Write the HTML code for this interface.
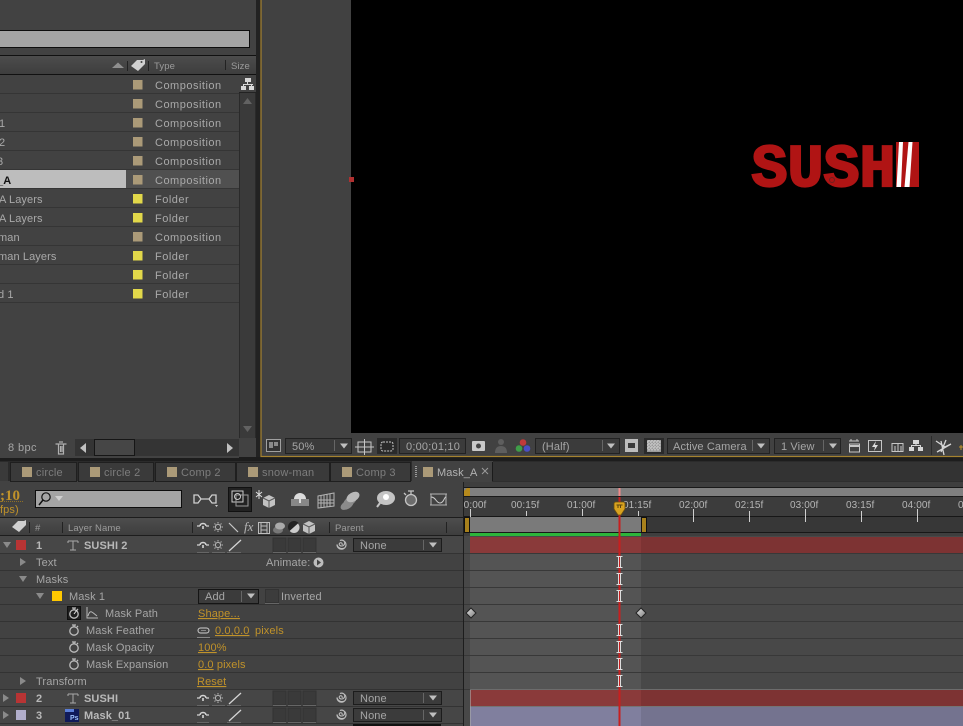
<!DOCTYPE html>
<html><head><meta charset="utf-8"><style>
html,body{margin:0;padding:0;background:#111;width:963px;height:726px;overflow:hidden}
svg{display:block}
text{font-family:"Liberation Sans",sans-serif;font-size:11px;letter-spacing:.12px;fill:#a6a6a6}
.p{letter-spacing:.5px;fill:#a9a9a9}
.n{letter-spacing:.1px;fill:#a9a9a9}
.y{fill:#c0922a;text-decoration:underline dotted}.o{fill:#c0922a}
.b{font-weight:bold;fill:#b8b8b8;letter-spacing:.1px}
.s{font-size:9.5px;fill:#9b9b9b;letter-spacing:.1px}
.d{font-size:10px;fill:#b5b5b5;letter-spacing:.1px}
.tab{fill:#7d7d7d;letter-spacing:.2px}
</style></head><body>
<svg width="963" height="726" viewBox="0 0 963 726" xmlns="http://www.w3.org/2000/svg">
<defs>
<clipPath id="rc"><rect x="464" y="497" width="499" height="20"/></clipPath>
<linearGradient id="hd" x1="0" y1="0" x2="0" y2="1"><stop offset="0" stop-color="#4d4d4d"/><stop offset="1" stop-color="#3d3d3d"/></linearGradient>
<linearGradient id="dm" x1="0" y1="0" x2="1" y2="1"><stop offset="0" stop-color="#e8e8e8"/><stop offset="1" stop-color="#777"/></linearGradient>
<g id="watch" fill="none" stroke="#bdbdbd" stroke-width="1.300"><circle cx="0" cy="1" r="4.200"/><path d="M-2-5H2M0-5V-3M3-4l1 1"/></g>
<g id="ibeam" fill="none" stroke="#ddd" stroke-width="1"><path d="M-3-5.500H-1V5.500H-3M3-5.500H1V5.500H3M-1-5.500H1M-1 5.500H1"/></g>
<g id="drop"><rect x="0" y="0" width="88" height="13" fill="#3b3b3b" stroke="#1c1c1c"/></g>
<g id="shy" fill="none" stroke="#d4d4d4" stroke-width="1.200"><path d="M-6 0H-3M3 0H6"/><path d="M-3 0a3 2.500 0 0 1 6 0M0 0v3" stroke-width="1.600"/></g>
<g id="sun" fill="none" stroke="#b5b5b5" stroke-width="1"><circle r="2.600"/><path d="M0-5V-3.500M0 5V3.500M-5 0H-3.500M5 0H3.500M-3.500-3.500L-2.500-2.500M3.500 3.500L2.500 2.500M-3.500 3.500L-2.500 2.500M3.500-3.500L2.500-2.500"/></g>
<g id="spiral" fill="none" stroke="#bdbdbd" stroke-width="1.100"><path d="M1 1a1.500 1.500 0 1 0-2 .5 3 3 0 1 0 0-5 4.500 4.500 0 1 1-3 4 5 5 0 0 0 8 3"/></g>
<path id="ddn" d="M-4-2.500H4L0 2.500Z" fill="#bfbfbf"/>
<g id="sw3"><g fill="#3a3a3a" stroke="#333"><rect x="0" y="0" width="13" height="14"/><rect x="15" y="0" width="13" height="14"/><rect x="30" y="0" width="13" height="14"/></g><path d="M0 14.500H13M15 14.500H28M30 14.500H43" stroke="#666"/></g>
<g id="kf"><path d="M0-5L5 0 0 5-5 0Z" fill="url(#dm)" stroke="#222"/></g>
</defs>

<rect width="963" height="726" fill="#424242"/>

<!-- PROJECT PANEL -->
<rect x="0" y="0" width="256" height="458" fill="#424242"/>
<rect x="-2" y="30.500" width="251.500" height="17" fill="#a4a4a4" stroke="#0d0d0d"/>
<rect x="0" y="55" width="256" height="20" fill="url(#hd)"/>
<path d="M0 55.500H256M0 74.500H256" stroke="#111"/>
<path d="M112 68H124L118 62.500Z" fill="#8f8f8f"/>
<path d="M127.500 61V71M148.500 61V71M225.500 60V70" stroke="#222"/>
<path d="M131 66l6-6h6l2-1v5l-7 7Z" fill="#d0d0d0"/><circle cx="141.500" cy="62" r="1" fill="#444"/>
<text x="154" y="69" class="s">Type</text><text x="231" y="69" class="s">Size</text>
<rect x="239" y="75" width="17" height="363" fill="#3a3a3a"/>
<path d="M239.500 75V438M255.500 75V438" stroke="#2a2a2a"/>
<rect x="239" y="75" width="17" height="18" fill="#424242"/>
<path d="M239 92.500H256" stroke="#222"/>
<g fill="#d8d8d8"><rect x="245" y="78" width="6" height="4"/><rect x="241" y="86" width="5" height="4"/><rect x="249" y="86" width="5" height="4"/><rect x="247" y="82" width="1" height="2"/><rect x="243" y="84" width="10" height="1"/><rect x="243" y="85" width="1" height="1"/><rect x="251" y="85" width="1" height="1"/></g>
<path d="M243 104H252L247.500 98Z" fill="#626262"/>
<path d="M243 426H252L247.500 432Z" fill="#626262"/>
<g stroke="#353535"><path d="M0 93.500H239M0 112.500H239M0 131.500H239M0 150.500H239M0 169.500H239M0 188.500H239M0 207.500H239M0 226.500H239M0 245.500H239M0 264.500H239M0 283.500H239M0 302.500H239"/></g>
<rect x="0" y="170" width="126" height="18" fill="#bdbdbd"/>
<rect x="126" y="170" width="113" height="18" fill="#505050"/>
<g fill="#ab9a78">
<rect x="133" y="80" width="9.500" height="9.500"/><rect x="133" y="99" width="9.500" height="9.500"/><rect x="133" y="118" width="9.500" height="9.500"/><rect x="133" y="137" width="9.500" height="9.500"/><rect x="133" y="156" width="9.500" height="9.500"/><rect x="133" y="175" width="9.500" height="9.500"/><rect x="133" y="232" width="9.500" height="9.500"/></g>
<g fill="#e2d84a">
<rect x="133" y="194" width="9.500" height="9.500"/><rect x="133" y="213" width="9.500" height="9.500"/><rect x="133" y="251" width="9.500" height="9.500"/><rect x="133" y="270" width="9.500" height="9.500"/><rect x="133" y="289" width="9.500" height="9.500"/></g>
<text x="155" y="89" class="p">Composition</text><text x="155" y="108" class="p">Composition</text><text x="155" y="127" class="p">Composition</text><text x="155" y="146" class="p">Composition</text><text x="155" y="165" class="p">Composition</text><text x="155" y="184" class="p">Composition</text><text x="155" y="203" class="p">Folder</text><text x="155" y="222" class="p">Folder</text><text x="155" y="241" class="p">Composition</text><text x="155" y="260" class="p">Folder</text><text x="155" y="279" class="p">Folder</text><text x="155" y="298" class="p">Folder</text>
<text x="-1" y="127" class="n">1</text><text x="-1" y="146" class="n">2</text><text x="-3" y="165" class="n">3</text>
<text x="-3" y="184" style="fill:#111;font-weight:bold">_A</text>
<text x="-1" y="203" class="n">A Layers</text><text x="-1" y="222" class="n">A Layers</text><text x="-2" y="241" class="n">man</text><text x="-2" y="260" class="n">man Layers</text><text x="-2" y="298" class="n">d 1</text>
<text x="8" y="451" style="letter-spacing:.4px">8 bpc</text>
<g fill="none" stroke="#b0b0b0"><path d="M55.500 444H66.500M58.500 444V454H63.500V444M59 442H63M60.500 446V452M62 446V452" stroke-width="1.200"/></g>
<rect x="75" y="439" width="164" height="17" fill="#343434"/>
<rect x="94.500" y="439.500" width="40" height="16" fill="#464646" stroke="#161616"/>
<path d="M86 443V453L80 448Z" fill="#c0c0c0"/><path d="M227 443V453L233 448Z" fill="#c0c0c0"/>

<!-- dark gap + VIEWER -->
<rect x="256" y="0" width="5" height="462" fill="#222"/>
<rect x="239" y="457" width="724" height="4" fill="#1d1d1d"/>
<rect x="0" y="458" width="963" height="3" fill="#1d1d1d"/>
<rect x="261" y="-2" width="720" height="458.500" fill="#414141" stroke="#a5822f" stroke-width="1.200"/>
<rect x="351" y="0" width="612" height="433" fill="#000"/>
<rect x="349" y="177" width="5" height="5" fill="#b03030"/>
<!-- SUSHI -->
<text x="751.500" y="186" textLength="144" lengthAdjust="spacingAndGlyphs" style="font-family:'Liberation Mono',monospace;font-weight:bold;font-size:60px;fill:#b01414;stroke:#b01414;stroke-width:2.200px;letter-spacing:0">SUSH</text>
<rect x="896" y="142" width="23" height="45" fill="#b01414"/>
<path d="M899 142H903L901 187H896.500ZM908.500 142H912.500L909.500 187H904.500Z" fill="#fff"/>
<circle cx="832" cy="180" r="2.500" fill="none" stroke="#6e2020"/>
<!-- viewer toolbar -->
<rect x="266.500" y="439.500" width="14" height="12" fill="#333" stroke="#a0a0a0"/><rect x="269" y="442" width="4" height="6" fill="#8a8a8a"/><rect x="274" y="442" width="4" height="4" fill="#8a8a8a"/>
<rect x="285.500" y="438.500" width="66" height="15" fill="#3b3b3b" stroke="#222"/>
<text x="292" y="450">50%</text><path d="M334.500 440V451" stroke="#666"/><use href="#ddn" x="344" y="446"/>
<path d="M358 442H371V452H358ZM364.500 439V455M355 447H374" fill="none" stroke="#c6c6c6"/>
<rect x="377" y="438" width="20" height="16" fill="#2a2a2a"/><rect x="381" y="442" width="12" height="9" rx="2" fill="none" stroke="#c6c6c6" stroke-dasharray="2 1"/>
<rect x="399.500" y="438.500" width="66" height="15" fill="#3b3b3b" stroke="#222"/>
<text x="406" y="450" textLength="54">0;00;01;10</text>
<rect x="472" y="441" width="13" height="10" rx="1" fill="#c9c9c9"/><circle cx="478.500" cy="446" r="2.500" fill="#444"/>
<circle cx="501" cy="442" r="3" fill="#5e5e5e"/><path d="M495 453q0-7 6-7t6 7Z" fill="#5e5e5e"/>
<circle cx="523" cy="442.500" r="3.300" fill="#c03a3a"/><circle cx="519" cy="448.500" r="3.300" fill="#3f9d48"/><circle cx="527" cy="448.500" r="3.300" fill="#4a4ec4"/>
<rect x="535.500" y="438.500" width="84" height="15" fill="#3b3b3b" stroke="#222"/>
<text x="542" y="450">(Half)</text><path d="M602.500 440V451" stroke="#666"/><use href="#ddn" x="611" y="446"/>
<rect x="625" y="439" width="13" height="13" fill="#bdbdbd"/><rect x="628" y="443" width="7" height="5" fill="#3a3a3a"/>
<rect x="644" y="438" width="20" height="16" fill="#2a2a2a"/>
<rect x="647" y="440" width="14" height="12" fill="#9b9b9b"/>
<path d="M647 442h14M647 445h14M647 448h14M649 440v12M652 440v12M655 440v12M658 440v12" stroke="#e0e0e0" stroke-dasharray="1.500 1.500"/>
<rect x="667.500" y="438.500" width="102" height="15" fill="#3b3b3b" stroke="#222"/>
<text x="673" y="450">Active Camera</text><path d="M752.500 440V451" stroke="#666"/><use href="#ddn" x="761" y="446"/>
<rect x="774.500" y="438.500" width="66" height="15" fill="#3b3b3b" stroke="#222"/>
<text x="781" y="450">1 View</text><path d="M823.500 440V451" stroke="#666"/><use href="#ddn" x="833" y="446"/>
<path d="M849 441H859M849.500 444H859.500V452H849.500ZM851 439V441M857 439V441" fill="none" stroke="#c6c6c6"/><rect x="850" y="445" width="9" height="2" fill="#c6c6c6"/>
<rect x="868.500" y="440.500" width="13" height="11" fill="none" stroke="#c6c6c6"/><path d="M876 441L872 447H875L874 451L878 445H875Z" fill="#ddd"/>
<path d="M892 443.500H903V451.500H892Z M895 446V451M898 443V451M901 446V451" fill="none" stroke="#c6c6c6"/>
<rect x="913" y="440" width="6" height="4" fill="#d6d6d6"/><rect x="909" y="447" width="5" height="4" fill="#d6d6d6"/><rect x="918" y="447" width="5" height="4" fill="#d6d6d6"/><path d="M916 444V446M911.500 447V445.500H920.500V447" stroke="#d6d6d6" fill="none"/>
<path d="M931.500 436V455" stroke="#2b2b2b"/>
<path d="M936 441L945 447 951 444M941 441L944 455M937 452L951 444M946 440L941 452" fill="none" stroke="#d6d6d6" stroke-width="1.300"/>
<path d="M959 447H963M961 445V450" stroke="#c0922a"/>

<!-- TABS -->
<rect x="0" y="461" width="963" height="20" fill="#2b2b2b"/>
<rect x="0" y="462" width="8" height="19" fill="#3a3a3a"/>
<g fill="#3a3a3a" stroke="#1f1f1f">
<rect x="10.500" y="462.500" width="66" height="19"/><rect x="78.500" y="462.500" width="75" height="19"/><rect x="155.500" y="462.500" width="80" height="19"/><rect x="236.500" y="462.500" width="93" height="19"/><rect x="330.500" y="462.500" width="80" height="19"/>
</g>
<rect x="412" y="461" width="81" height="21" fill="#424242"/>
<path d="M492.500 462V481H963" stroke="#1b1b1b" fill="none"/>
<rect x="493" y="462" width="470" height="19" fill="#333"/>
<g fill="#ab9a78"><rect x="22" y="467" width="10" height="10"/><rect x="90" y="467" width="10" height="10"/><rect x="167" y="467" width="10" height="10"/><rect x="248" y="467" width="10" height="10"/><rect x="342" y="467" width="10" height="10"/><rect x="423" y="467" width="10" height="10"/></g>
<text x="36" y="476" class="tab">circle</text><text x="104" y="476" class="tab">circle 2</text><text x="181" y="476" class="tab">Comp 2</text><text x="262" y="476" class="tab">snow-man</text><text x="356" y="476" class="tab">Comp 3</text>
<text x="437" y="476" style="fill:#b2b2b2">Mask_A</text>
<path d="M482 468L488 474M488 468L482 474" stroke="#9a9a9a"/>
<path d="M416 466V478" stroke="#999" stroke-dasharray="1 1" stroke-width="2"/>

<!-- TIMELINE TOP CONTROLS -->
<rect x="0" y="482" width="463" height="37" fill="#424242"/>
<text x="0" y="500" style="font-family:'Liberation Serif',serif;font-weight:bold;font-size:15px;fill:#c0922a;letter-spacing:0">;10</text>
<path d="M0 501.500H23" stroke="#8f7026" stroke-dasharray="1 1"/>
<text x="0" y="513" style="fill:#c0922a">fps)</text>
<rect x="35.500" y="490.500" width="146" height="17" fill="#a4a4a4" stroke="#0d0d0d"/>
<circle cx="46" cy="497" r="4.200" fill="none" stroke="#111" stroke-width="1.200"/><path d="M43 500L39 505" stroke="#111" stroke-width="1.500"/>
<path d="M55 496H63L59 501Z" fill="#cfcfcf"/>
<g fill="none" stroke="#cfcfcf" stroke-width="1.300"><path d="M194 495h4l3 4-3 4h-4zM216 495h-4l-3 4 3 4h4zM201 499h8"/></g><path d="M215 505H218L216.500 507Z" fill="#ccc"/>
<rect x="228.500" y="487.500" width="23" height="24" fill="#222" stroke="#111"/>
<rect x="232" y="491" width="11" height="11" fill="none" stroke="#ccc"/><rect x="236" y="495" width="12" height="11" fill="none" stroke="#999"/><circle cx="237.500" cy="496.500" r="3" fill="none" stroke="#ccc"/>
<path d="M256 492L262 497M262 492L256 497M259 490V499" stroke="#ddd"/>
<path d="M263 498l6-3 6 3v7l-6 3-6-3Z" fill="#c2c2c2"/><path d="M263 498l6 3 6-3M269 501v7" stroke="#555" fill="none"/>
<path d="M291 499h18v7h-18Z" fill="#888"/><path d="M294 499a6 6 0 0 1 12 0Z" fill="#dcdcdc"/><rect x="299" y="499" width="2" height="4" fill="#dcdcdc"/>
<g stroke="#b4b4b4" fill="none"><path d="M318 496l16-3v13l-16 2Z M321 495v13M324 495v12M327 494v13M330 494v12M318 500h16M318 503h16"/></g>
<g fill="#8b8b8b"><ellipse cx="347" cy="505" rx="7" ry="4" transform="rotate(-30 347 505)"/><ellipse cx="350" cy="501" rx="7" ry="4" transform="rotate(-30 350 501)"/></g><ellipse cx="353" cy="497" rx="7" ry="4.500" transform="rotate(-30 353 497)" fill="#b9b9b9"/>
<ellipse cx="386" cy="498" rx="9" ry="7" fill="#c4c4c4"/><circle cx="386" cy="497" r="3" fill="#fff"/><path d="M380 503L377 507" stroke="#c4c4c4" stroke-width="2"/>
<circle cx="411" cy="500" r="5.500" fill="#6c6c6c" stroke="#c4c4c4" stroke-width="1.300"/><path d="M408 491H414M411 491V494M404 493L406 495" stroke="#c4c4c4" fill="none" stroke-width="1.300"/>
<path d="M430 494H447M430 505H447M431 494V505M446 494V505" stroke="#b4b4b4" fill="none"/><path d="M431 497C436 497 436 503 440 503S444 497 446 497" stroke="#ccc" fill="none"/>

<!-- Timeline column header -->
<rect x="0" y="518" width="463" height="18" fill="url(#hd)"/>
<path d="M0 517.500H463M0 535.500H463" stroke="#1d1d1d"/>
<path d="M12 527l6-6h6l2-1v5l-7 7Z" fill="#d0d0d0"/>
<path d="M29.500 522V533M62.500 522V533M192.500 522V533M329.500 522V533M446.500 522V533" stroke="#222"/>
<text x="35" y="531" class="s">#</text><text x="68" y="531" class="s">Layer Name</text><text x="335" y="531" class="s">Parent</text>
<use href="#shy" x="203" y="526"/><use href="#sun" x="218" y="527"/>
<path d="M229 523L238 532" stroke="#c6c6c6" stroke-width="1.200"/>
<text x="244" y="531" style="font-family:'Liberation Serif',serif;font-style:italic;font-size:13px;fill:#b5b5b5;letter-spacing:0">fx</text>
<g fill="none" stroke="#bdbdbd"><rect x="258.500" y="522.500" width="11" height="11"/><path d="M261 522V534M267 522V534M261 526H267M261 530H267"/></g>
<ellipse cx="278" cy="530" rx="5" ry="3.500" fill="#777"/><ellipse cx="280" cy="526" rx="5" ry="3.500" fill="#aaa"/>
<circle cx="294" cy="527.500" r="5.500" fill="#ccc"/><path d="M289.500 531a6 6 0 0 1 9-8Z" fill="#222"/>
<path d="M303 524l6-3 6 3v7l-6 3-6-3Z" fill="#c2c2c2"/><path d="M303 524l6 3 6-3M309 527v7" stroke="#555" fill="none"/>

<!-- Layer rows -->
<rect x="0" y="536" width="463" height="190" fill="#424242"/>
<rect x="0" y="689" width="463" height="37" fill="#464646"/>
<rect x="0" y="536" width="463" height="17" fill="#474747"/>
<g stroke="#333"><path d="M0 553.500H463M0 570.500H463M0 587.500H463M0 604.500H463M0 621.500H463M0 638.500H463M0 655.500H463M0 672.500H463M0 689.500H463M0 706.500H463M0 723.500H463"/></g>
<path d="M3 542H11L7 548Z" fill="#8a8a8a"/>
<rect x="16" y="540" width="10" height="10" fill="#b83434"/>
<text x="36" y="549" class="b">1</text>
<path d="M68 541H78M73 541V550M70 550H76M68 541V543M78 541V543" stroke="#a8a8a8" fill="none"/>
<text x="84" y="549" class="b">SUSHI 2</text>
<use href="#shy" x="203" y="545"/><path d="M197 552.500H209M212 552.500H225M227 552.500H241" stroke="#666"/>
<use href="#sun" x="218" y="545"/><path d="M229 551L241 540" stroke="#d4d4d4" stroke-width="1.300"/>
<use href="#sw3" x="273" y="538"/><use href="#spiral" x="341" y="544"/>
<use href="#drop" x="353.500" y="538.500"/><text x="360" y="549">None</text><path d="M423.500 540V550" stroke="#666"/><use href="#ddn" x="433" y="545"/>
<path d="M20 558V566L26 562Z" fill="#8a8a8a"/><text x="36" y="566">Text</text>
<text x="266" y="566">Animate:</text><circle cx="318.500" cy="562.500" r="5" fill="#bdbdbd"/><path d="M317 559.500V565.500L321 562.500Z" fill="#444"/>
<path d="M19 576H27L23 582Z" fill="#8a8a8a"/><text x="36" y="583">Masks</text>
<path d="M36 593H44L40 599Z" fill="#8a8a8a"/><rect x="52" y="591" width="10" height="10" fill="#ffc800"/><text x="69" y="600">Mask 1</text>
<rect x="198.500" y="589.500" width="60" height="14" fill="#3b3b3b" stroke="#151515"/><text x="205" y="600">Add</text><path d="M241.500 591V602" stroke="#666"/><use href="#ddn" x="251" y="596"/>
<path d="M265.500 589.500H278.500V602.500H265.500Z" fill="#3c3c3c" stroke="#333"/><path d="M265 603.500H279" stroke="#666"/><text x="281" y="600">Inverted</text>
<rect x="67.500" y="606.500" width="13" height="13" fill="#1e1e1e" stroke="#0f0f0f"/><use href="#watch" x="74" y="613"/><path d="M74 614L77 610" stroke="#ddd"/>
<path d="M87 607V618H98M88 616C90 609 92 612 97 616" fill="none" stroke="#b8b8b8"/>
<text x="105" y="617">Mask Path</text><text x="198" y="617" class="y">Shape...</text>
<use href="#watch" x="74" y="630"/><text x="86" y="634">Mask Feather</text>
<rect x="198" y="628" width="11" height="5" rx="2.500" fill="none" stroke="#d0d0d0"/><path d="M201 630.500H206M197 637.500H210" stroke="#888"/>
<text x="215" y="634" class="y">0.0,0.0</text><text x="255" y="634" class="o">pixels</text>
<use href="#watch" x="74" y="647"/><text x="86" y="651">Mask Opacity</text>
<text x="198" y="651" class="o"><tspan class="y">100</tspan>%</text>
<use href="#watch" x="74" y="664"/><text x="86" y="668">Mask Expansion</text>
<text x="198" y="668" class="o"><tspan class="y">0.0</tspan> pixels</text>
<path d="M20 677V685L26 681Z" fill="#8a8a8a"/><text x="36" y="685">Transform</text>
<text x="197" y="685" class="y">Reset</text>
<path d="M3 694V702L9 698Z" fill="#8a8a8a"/><rect x="16" y="693" width="10" height="10" fill="#b83434"/>
<text x="36" y="702" class="b">2</text>
<path d="M68 694H78M73 694V703M70 703H76M68 694V696M78 694V696" stroke="#a8a8a8" fill="none"/>
<text x="84" y="702" class="b">SUSHI</text>
<use href="#shy" x="203" y="698"/><path d="M197 705.500H209M212 705.500H225M227 705.500H241" stroke="#666"/>
<use href="#sun" x="218" y="698"/><path d="M229 704L241 693" stroke="#d4d4d4" stroke-width="1.300"/>
<use href="#sw3" x="273" y="691"/><use href="#spiral" x="341" y="697"/>
<use href="#drop" x="353.500" y="691.500"/><text x="360" y="702">None</text><path d="M423.500 693V703" stroke="#666"/><use href="#ddn" x="433" y="698"/>
<path d="M3 711V719L9 715Z" fill="#8a8a8a"/><rect x="16" y="710" width="10" height="10" fill="#b1aecb"/>
<text x="36" y="719" class="b">3</text>
<rect x="65" y="709" width="14" height="13" fill="#101a5a"/><rect x="65" y="709" width="9" height="3" fill="#5a7ed8"/><text x="70" y="720" style="font-size:7px;font-weight:bold;fill:#9fc3ff;letter-spacing:0">Ps</text>
<text x="84" y="719" class="b">Mask_01</text>
<use href="#shy" x="203" y="715"/><path d="M197 722.500H209M227 722.500H241" stroke="#666"/>
<path d="M229 721L241 710" stroke="#d4d4d4" stroke-width="1.300"/>
<use href="#sw3" x="273" y="708"/><use href="#spiral" x="341" y="714"/>
<use href="#drop" x="353.500" y="708.500"/><text x="360" y="719">None</text><path d="M423.500 710V720" stroke="#666"/><use href="#ddn" x="433" y="715"/>
<rect x="353" y="724" width="88" height="2" fill="#111"/>

<!-- RIGHT TIMELINE -->
<rect x="463" y="482" width="500" height="244" fill="#3e3e3e"/>
<path d="M463.500 482V726" stroke="#1d1d1d"/>
<rect x="464" y="488" width="499" height="8" fill="#7f7f7f"/>
<path d="M464 487.500H963M464 496.500H963" stroke="#191919"/>
<path d="M464 496V491L467 488H470V496Z" fill="#b68a1d"/>
<rect x="464" y="497" width="499" height="20" fill="#3c3c3c"/>
<rect x="464" y="517" width="499" height="16" fill="#373737"/>
<path d="M464 516.500H963M464 532.500H963" stroke="#171717"/>
<rect x="470" y="517" width="171" height="16" fill="#7a7a7a"/>
<path d="M470 516.500H641M470 532.500H641" stroke="#171717"/>
<rect x="464.500" y="517.500" width="5" height="15" fill="#a8811c" stroke="#111"/>
<rect x="641.500" y="517.500" width="5" height="15" fill="#a8811c" stroke="#111"/>
<rect x="470" y="533" width="171" height="3" fill="#2cb53a"/>
<g clip-path="url(#rc)"><text x="458" y="508" class="d">00:00f</text></g>
<text x="511" y="508" class="d">00:15f</text><text x="567" y="508" class="d">01:00f</text><text x="623" y="508" class="d">01:15f</text><text x="679" y="508" class="d">02:00f</text><text x="735" y="508" class="d">02:15f</text><text x="790" y="508" class="d">03:00f</text><text x="846" y="508" class="d">03:15f</text><text x="902" y="508" class="d">04:00f</text><text x="958" y="508" class="d">04:15f</text>
<g stroke="#cfcfcf"><path d="M470.500 509V517M526.500 511V516M582.500 509V516M638.500 511V516M693.500 509V522M749.500 511V522M805.500 509V522M861.500 511V522M917.500 509V522"/></g>
<rect x="464" y="536" width="499" height="190" fill="#484848"/>
<rect x="470" y="553" width="171" height="137" fill="#545454"/>
<g stroke="#383838"><path d="M464 553.500H963M464 570.500H963M464 587.500H963M464 604.500H963M464 621.500H963M464 638.500H963M464 655.500H963M464 672.500H963M464 689.500H963"/></g>
<rect x="470" y="537" width="171" height="16" fill="#8a3a3a"/><rect x="641" y="537" width="322" height="16" fill="#7d3333"/>
<rect x="470" y="690" width="171" height="16" fill="#8a3a3a"/><rect x="641" y="690" width="322" height="16" fill="#7d3333"/>
<rect x="470" y="707" width="171" height="19" fill="#807f9e"/><rect x="641" y="707" width="322" height="19" fill="#74738f"/>
<path d="M470 689.500H963M470 706.500H963" stroke="#a0a0a0" stroke-opacity=".5"/>
<path d="M470.500 690V726" stroke="#aaa" stroke-opacity=".6"/>
<use href="#kf" x="471" y="613"/><use href="#kf" x="641" y="613"/>
<!-- playhead -->
<rect x="618.500" y="497" width="2" height="229" fill="#c81f1f"/>
<rect x="618.500" y="488" width="2" height="8" fill="#f08a8a"/>
<path d="M614 504Q614 502 616 502H623Q625 502 625 504V509L621 515H618L614 509Z" fill="#d8a21f" stroke="#6b4f10" stroke-width=".8"/>
<path d="M616.500 505H622.500M618 505V508M620.500 505V508" stroke="#5a430e"/>
<use href="#ibeam" x="619.500" y="562"/><use href="#ibeam" x="619.500" y="579"/><use href="#ibeam" x="619.500" y="596"/><use href="#ibeam" x="619.500" y="630"/><use href="#ibeam" x="619.500" y="647"/><use href="#ibeam" x="619.500" y="664"/><use href="#ibeam" x="619.500" y="681"/>
</svg>
</body></html>
